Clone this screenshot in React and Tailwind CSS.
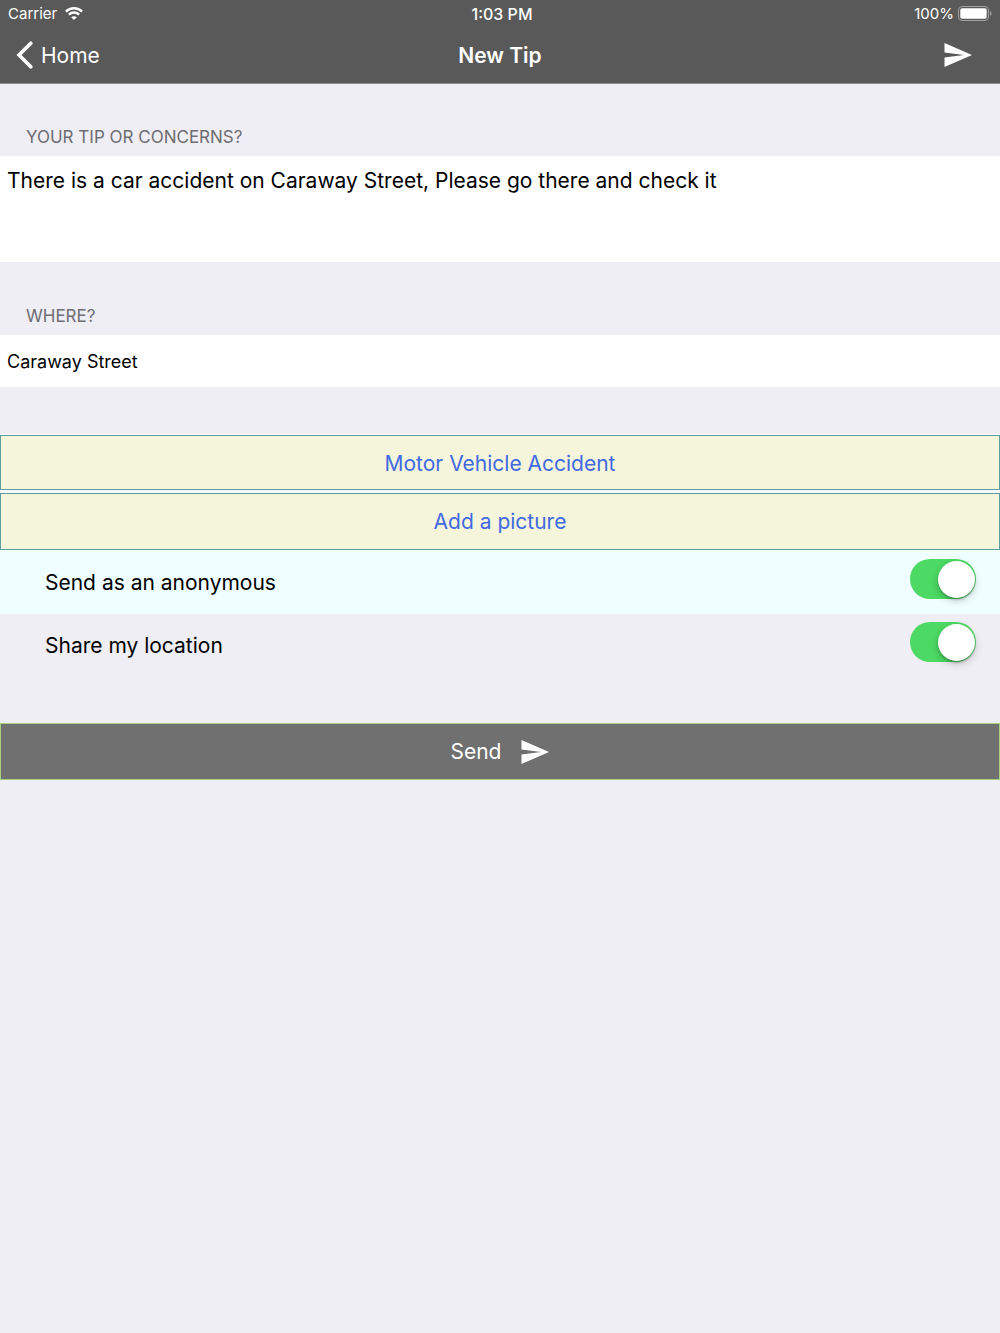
import { useState } from "react";

function SendIcon({ className }) {
  return (
    <svg viewBox="0 0 28 24" className={className} fill="currentColor" aria-hidden="true">
      <path d="M0.5 0 L28 12 L0.5 24 V14.6 L20 12 L0.5 9.4 Z" />
    </svg>
  );
}

function WifiIcon() {
  return (
    <svg viewBox="0 0 18 13" className="h-[13px] w-[18px]" fill="none" stroke="currentColor" strokeWidth="2.3" aria-hidden="true">
      <path d="M0.9 4.6 C5.4 0.1 12.6 0.1 17.1 4.6" />
      <path d="M3.8 7.6 C6.7 4.8 11.3 4.8 14.2 7.6" />
      <path d="M9 13 L6.2 10.2 C7.8 8.8 10.2 8.8 11.8 10.2 Z" fill="currentColor" stroke="none" />
    </svg>
  );
}

function BatteryIcon() {
  return (
    <svg viewBox="0 0 34 15" className="h-[15px] w-[34px]" aria-hidden="true">
      <rect x="0.5" y="0.5" width="30" height="14" rx="3.5" fill="none" stroke="#a0a0a0" />
      <rect x="2.3" y="2.3" width="26.4" height="10.4" rx="1.8" fill="#fff" />
      <path d="M32 5 C34 5.8 34 9.2 32 10 Z" fill="#a0a0a0" />
    </svg>
  );
}

function SwitchRow({ id, label, className }) {
  const [on, setOn] = useState(true);
  return (
    <div className={className}>
      <label htmlFor={id} className="pt-2">{label}</label>
      <input
        id={id}
        type="checkbox"
        role="switch"
        checked={on}
        onChange={() => setOn(!on)}
        className="flex h-10 w-[66px] cursor-pointer appearance-none items-center rounded-full bg-[#d8d8dc] px-[1px] before:block before:size-[37px] before:rounded-full before:bg-white before:shadow-[0_3px_8px_rgba(0,0,0,0.2),0_2px_2px_rgba(0,0,0,0.2)] checked:justify-end checked:bg-[#4cd964]"
      />
    </div>
  );
}

export default function App() {
  return (
    <div className="min-h-screen bg-[#efeef4] font-[Inter,'Liberation_Sans',sans-serif] text-[21px] leading-7 text-black">
      <header className="border-b border-[#8e8e90] bg-[#595959] text-white">
        <div className="grid h-[27px] grid-cols-3 items-center px-2 text-[15px] leading-5">
          <div className="flex items-center gap-2">
            <span>Carrier</span>
            <WifiIcon />
          </div>
          <div className="pl-1 text-center text-base leading-5 font-medium">1:03 PM</div>
          <div className="flex items-center justify-end gap-1">
            <span>100%</span>
            <BatteryIcon />
          </div>
        </div>
        <div className="grid h-14 grid-cols-3 items-center pr-7 pl-4">
          <button type="button" className="flex items-center gap-2 justify-self-start">
            <svg viewBox="0 0 17 28" className="h-7 w-[17px]" fill="none" stroke="currentColor" strokeWidth="3.6" strokeLinecap="round" strokeLinejoin="miter" aria-hidden="true">
              <path d="M14.8 2.2 L3 14 L14.8 25.8" />
            </svg>
            <span className="pt-0.5">Home</span>
          </button>
          <h1 className="pt-0.5 pl-3 text-center font-semibold">New Tip</h1>
          <button type="button" aria-label="Send tip" className="justify-self-end">
            <SendIcon className="h-6 w-7" />
          </button>
        </div>
      </header>

      <main>
        <label htmlFor="tip" className="flex h-[72px] items-end px-[26px] pb-2 text-[17px] leading-[22px] text-[#6d6d72] uppercase">
          Your tip or concerns?
        </label>
        <textarea
          id="tip"
          defaultValue="There is a car accident on Caraway Street, Please go there and check it"
          className="block h-[106px] w-full resize-none bg-white px-[7px] py-[11px] outline-none"
        />
        <label htmlFor="where" className="flex h-[73px] items-end px-[26px] pb-2 text-[17px] leading-[22px] text-[#6d6d72] uppercase">
          Where?
        </label>
        <input id="where" type="text" defaultValue="Caraway Street" className="block h-[52px] w-full bg-white px-[7px] text-[18px] outline-none" />

        <div className="mt-[47px] flex flex-col gap-[3px] bg-[#f4f9fc] pt-[1px] text-[#4169e1]">
          <button type="button" className="h-[55px] border border-[#5f9ea0] bg-[#f5f5dc] pt-0.5">Motor Vehicle Accident</button>
          <button type="button" className="h-[57px] border border-[#5f9ea0] bg-[#f5f5dc]">Add a picture</button>
        </div>

        <SwitchRow id="anonymous" label="Send as an anonymous" className="flex h-16 items-center justify-between bg-[#f0ffff] pr-6 pb-1.5 pl-[45px]" />
        <SwitchRow id="location" label="Share my location" className="flex h-[62px] items-center justify-between pr-6 pb-1.5 pl-[45px]" />

        <button type="button" className="mt-[47px] flex h-[57px] w-full items-center justify-center gap-5 border border-[#a9cf80] bg-[#707070] text-white">
          <span>Send</span>
          <SendIcon className="h-6 w-7" />
        </button>
      </main>
    </div>
  );
}
